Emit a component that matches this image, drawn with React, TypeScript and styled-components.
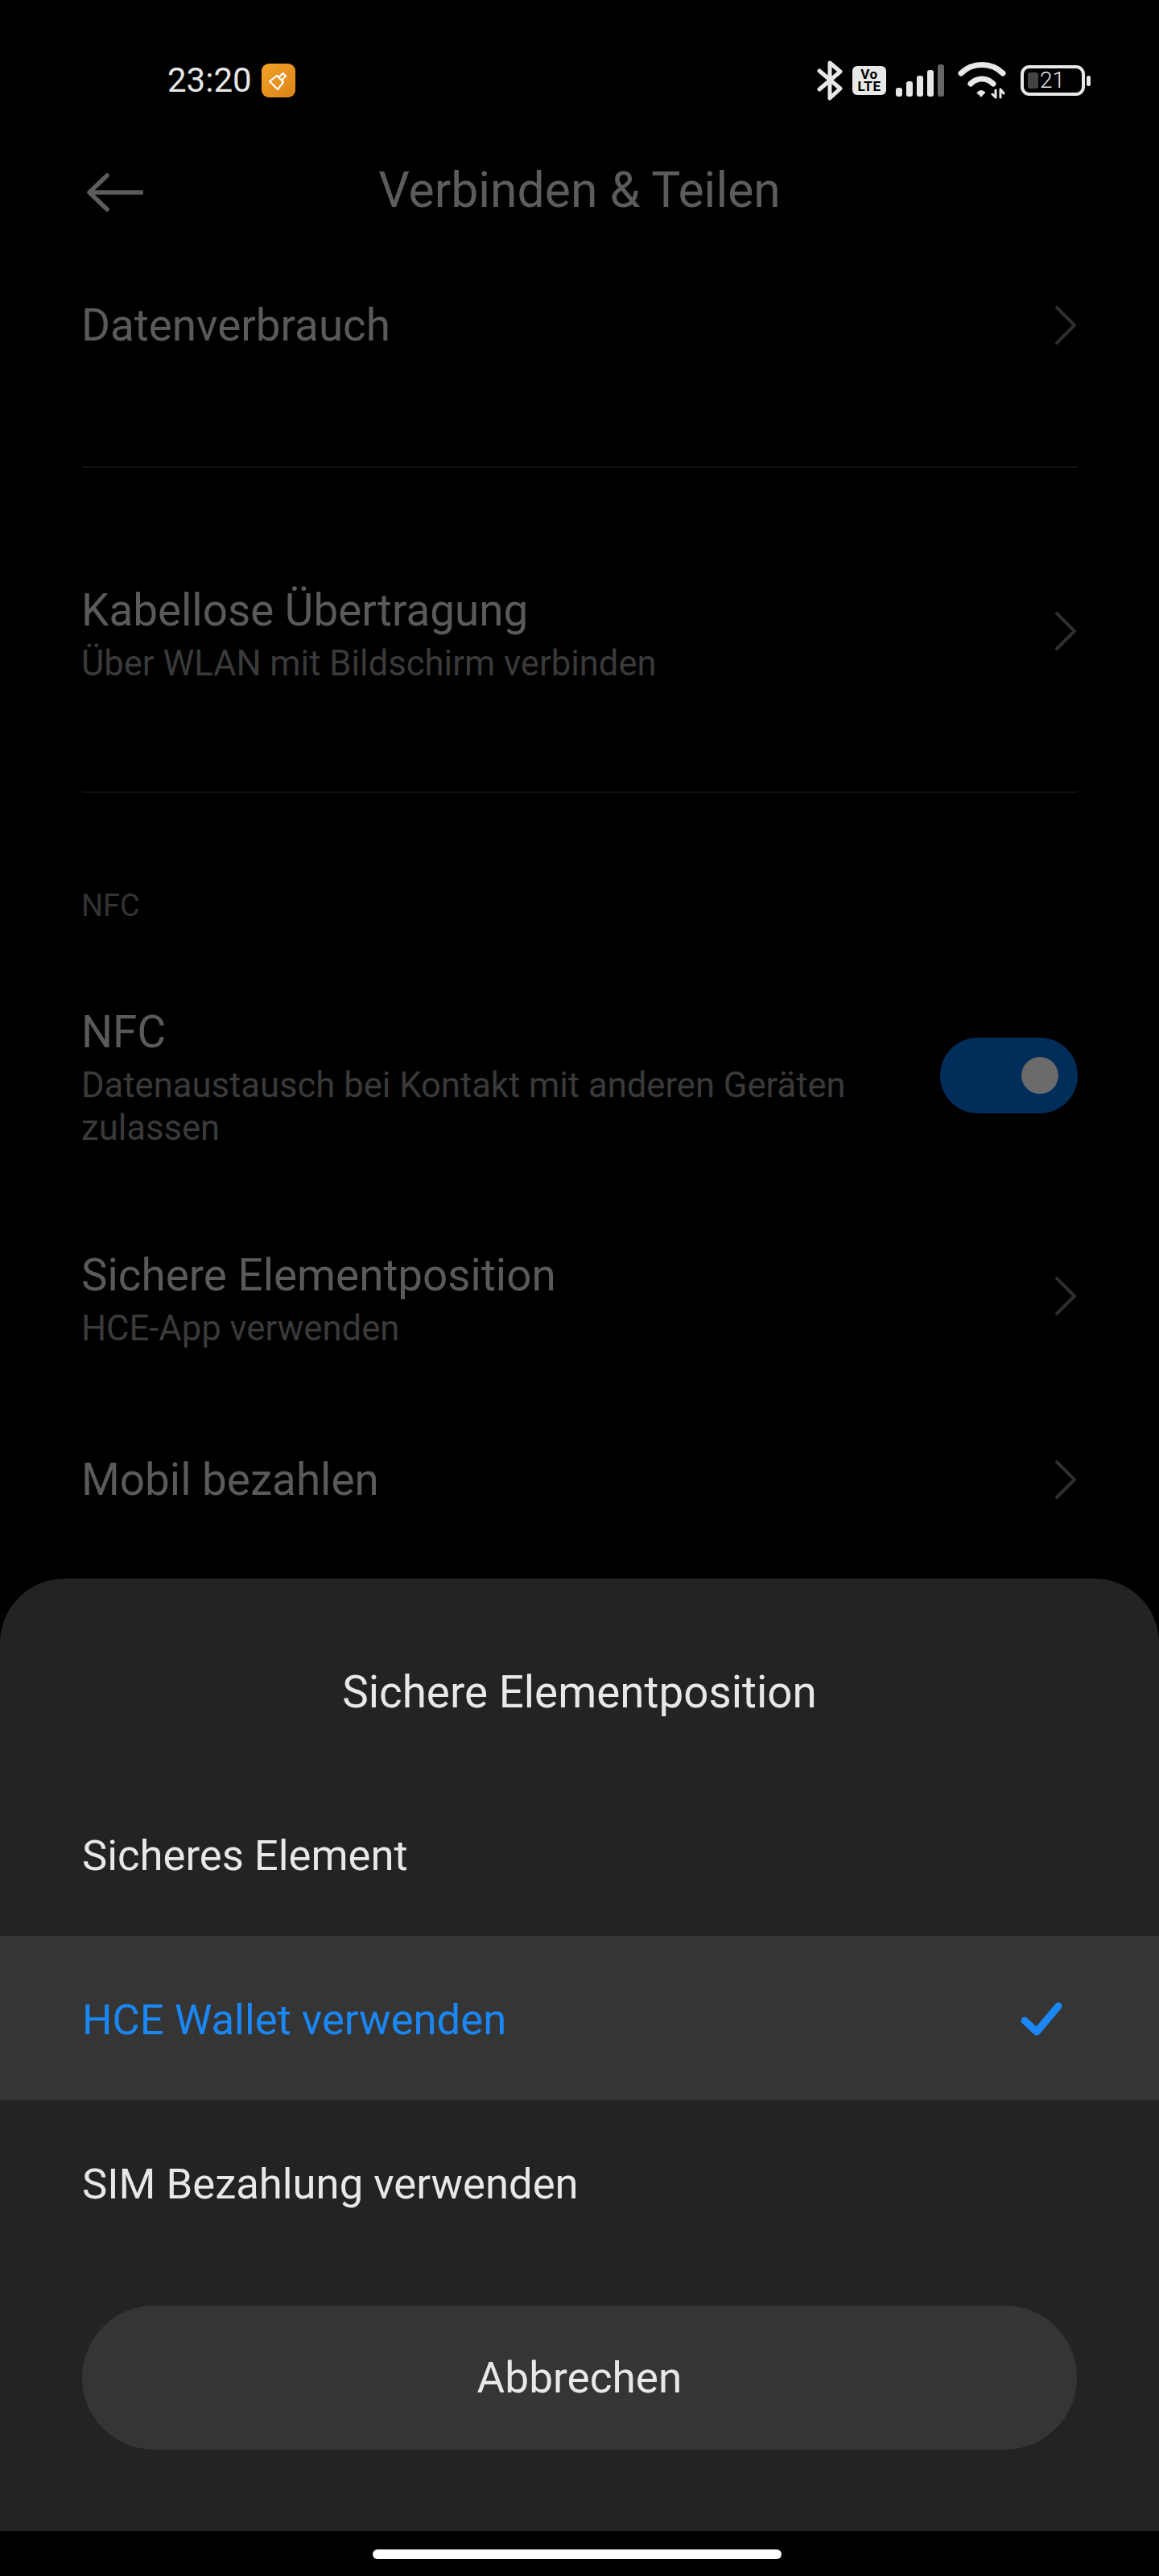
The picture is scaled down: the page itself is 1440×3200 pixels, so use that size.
import React from "react";
import styled, { createGlobalStyle } from "styled-components";

const Global = createGlobalStyle`
  html, body { margin: 0; padding: 0; background: #000; }
  * { box-sizing: border-box; }
`;

const Screen = styled.div`
  width: 1440px;
  height: 3200px;
  background: #000;
  display: flex;
  flex-direction: column;
  font-family: Roboto, "Liberation Sans", sans-serif;
  overflow: hidden;
`;

const StatusBar = styled.div`
  height: 130px;
  padding: 70px 84px 0 208px;
  display: flex;
  align-items: flex-start;
  justify-content: space-between;
  flex: none;
`;
const StatusLeft = styled.div`
  display: flex;
  align-items: center;
  gap: 12px;
  height: 60px;
`;
const StatusRight = styled.div`
  display: flex;
  align-items: center;
  height: 60px;
  gap: 12px;
`;
const Clock = styled.span`
  font-size: 42px;
  line-height: 60px;
  color: #e6e6e6;
`;
const CleanBadge = styled.div`
  width: 42px;
  height: 42px;
  border-radius: 9px;
  background: linear-gradient(135deg, #f0a126, #dc8419);
  display: flex;
  align-items: center;
  justify-content: center;
`;
const Volte = styled.div`
  width: 42px;
  height: 36px;
  border-radius: 6px;
  background: #e8e8e8;
  color: #000;
  font-size: 17px;
  line-height: 15px;
  font-weight: 700;
  text-align: center;
  padding-top: 3px;
  letter-spacing: 0.5px;
`;
const SignalIcon = styled.svg`
  width: 60px;
  height: 40px;
  flex: none;
`;
const WifiIcon = styled.svg`
  width: 60px;
  height: 46px;
  margin-left: 5px;
  flex: none;
`;
const Battery = styled.div`
  position: relative;
  width: 80px;
  height: 38px;
  border: 4px solid #e8e8e8;
  border-radius: 11px;
  display: flex;
  align-items: center;
  padding-left: 5px;
  margin-left: 6px;
  margin-right: 8px;
`;
const BatteryLevel = styled.div`
  width: 13px;
  height: 20px;
  border-radius: 3px;
  background: #444;
  flex: none;
`;
const BatteryText = styled.span`
  font-size: 28px;
  font-weight: 300;
  color: #e8e8e8;
  margin-left: 2px;
  line-height: 30px;
`;
const BatteryNub = styled.div`
  position: absolute;
  left: 78px;
  top: 9px;
  width: 5px;
  height: 13px;
  border-radius: 3px;
  background: #e8e8e8;
`;

const Header = styled.div`
  height: 212px;
  flex: none;
  display: grid;
  grid-template-columns: 1fr auto 1fr;
  align-items: start;
  padding-top: 72px;
`;
const BackIcon = styled.svg`
  width: 70px;
  height: 50px;
  margin: 12px 0 0 108px;
`;
const Title = styled.h1`
  margin: 0;
  font-size: 60.7px;
  line-height: 70px;
  font-weight: 400;
  color: #5c5c5c;
`;

const Content = styled.div`
  flex: 1;
  min-height: 0;
  padding: 0 100px 0 101px;
  display: flex;
  flex-direction: column;
`;
const Row = styled.div<{ $h: number; $mt?: number }>`
  height: ${(p) => p.$h}px;
  margin-top: ${(p) => p.$mt ?? 0}px;
  flex: none;
  display: flex;
  align-items: center;
  justify-content: space-between;
`;
const RowText = styled.div`
  display: flex;
  flex-direction: column;
  max-width: 980px;
  padding-top: 2px;
`;
const RowTitle = styled.div`
  font-size: 54.8px;
  line-height: 66px;
  color: #5a5a5a;
`;
const RowSub = styled.div`
  font-size: 43.6px;
  line-height: 53px;
  margin-top: 7px;
  color: #3a3a3a;
`;
const Chevron = styled.svg<{ $up?: boolean }>`
  width: 30px;
  height: 54px;
  flex: none;
  margin-bottom: ${(p) => (p.$up ? 6 : 0)}px;
`;
const Divider = styled.div<{ $after: number; $before: number }>`
  height: 2px;
  background: #101010;
  margin: ${(p) => p.$before}px 1px ${(p) => p.$after}px;
  flex: none;
`;
const SectionLabel = styled.div`
  font-size: 38px;
  line-height: 44px;
  color: #333;
  flex: none;
  padding-top: 1px;
`;
const Switch = styled.div`
  width: 171px;
  height: 94px;
  border-radius: 47px;
  background: #002d5a;
  display: flex;
  align-items: center;
  justify-content: flex-end;
  padding-right: 24px;
  flex: none;
  margin: 0 1px 4px 0;
`;
const Knob = styled.div`
  width: 46px;
  height: 46px;
  border-radius: 50%;
  background: #6b6b6b;
`;

const Sheet = styled.div`
  flex: none;
  height: 1183px;
  background: #232324;
  border-radius: 80px 80px 0 0;
  display: flex;
  flex-direction: column;
`;
const SheetTitle = styled.div`
  font-size: 54.8px;
  line-height: 70px;
  color: #e8e8e8;
  text-align: center;
  padding-top: 106px;
  height: 240px;
`;
const Option = styled.div<{ $active?: boolean }>`
  height: 204px;
  padding: 3px 102px 0;
  display: flex;
  align-items: center;
  justify-content: space-between;
  font-size: 52.6px;
  color: ${(p) => (p.$active ? "#1a87f5" : "#e8e8e8")};
  background: ${(p) => (p.$active ? "#353536" : "transparent")};
`;
const CheckIcon = styled.svg`
  width: 60px;
  height: 50px;
  margin-right: 14px;
`;
const CancelButton = styled.div`
  margin: 51px 102px 0;
  height: 179px;
  border-radius: 90px;
  background: #353536;
  color: #e8e8e8;
  font-size: 53.2px;
  display: flex;
  align-items: center;
  justify-content: center;
`;
const NavArea = styled.div`
  flex: none;
  height: 56px;
  display: flex;
  justify-content: center;
  padding-top: 23px;
`;
const HomeBar = styled.div`
  width: 508px;
  height: 12px;
  border-radius: 6px;
  background: #fff;
  margin-left: -6px;
`;

const RowChevron = ({ up }: { up?: boolean }) => (
  <Chevron $up={up} viewBox="0 0 30 54" fill="none">
    <path d="M3 5 L25 27 L3 49" stroke="#2e2e2e" strokeWidth="4" strokeLinecap="round" strokeLinejoin="round" />
  </Chevron>
);

export default function App() {
  return (
    <Screen>
      <Global />
      <StatusBar>
        <StatusLeft>
          <Clock>23:20</Clock>
          <CleanBadge>
            <svg width="28" height="28" viewBox="0 0 28 28" fill="none" stroke="#fff" strokeWidth="2.2" strokeLinejoin="round" strokeLinecap="round">
              <path d="M3 15 L12 8 L20 16 L13 25 Z" />
              <path d="M12 8 L14.5 10 L19.5 5 L23 8.5 L18 13.5 L20 16" />
            </svg>
          </CleanBadge>
        </StatusLeft>
        <StatusRight>
          <svg width="32" height="50" viewBox="0 0 32 50" fill="none" stroke="#e8e8e8" strokeWidth="5" strokeLinecap="round" strokeLinejoin="round">
            <path d="M3 13 L29 35 L16 47 L16 3 L29 14 L3 36" />
          </svg>
          <Volte>
            Vo
            <br />
            LTE
          </Volte>
          <SignalIcon viewBox="0 0 60 40" fill="#e8e8e8">
            <rect x="0" y="29" width="8" height="11" rx="3" />
            <rect x="13" y="21" width="8" height="19" rx="3" />
            <rect x="26" y="14" width="8" height="26" rx="3" />
            <rect x="39" y="7" width="8" height="33" rx="3" />
            <rect x="52" y="0" width="8" height="40" rx="3" fill="#666" />
          </SignalIcon>
          <WifiIcon viewBox="0 0 60 46" fill="none" stroke="#e8e8e8" strokeWidth="7" strokeLinecap="round">
            <path d="M4 14 C18 0 42 0 56 14" />
            <path d="M16 27 C24 19 36 19 44 27" />
            <path d="M24 38 Q29 33 34 38 L29 43 Z" fill="#e8e8e8" strokeWidth="1" strokeLinejoin="round" />
            <path d="M47 44 L47 35 M43 40 L47 44 M53 34 L53 44 M53 34 L57 39" strokeWidth="3" />
          </WifiIcon>
          <Battery>
            <BatteryLevel />
            <BatteryText>21</BatteryText>
            <BatteryNub />
          </Battery>
        </StatusRight>
      </StatusBar>

      <Header>
        <BackIcon viewBox="0 0 70 50" fill="none">
          <path d="M25 4 L3 25 L25 46 M3 25 L68 25" stroke="#5c5c5c" strokeWidth="5.5" strokeLinecap="round" strokeLinejoin="round" />
        </BackIcon>
        <Title>Verbinden &amp; Teilen</Title>
      </Header>

      <Content>
        <Row $h={124}>
          <RowTitle>Datenverbrauch</RowTitle>
          <RowChevron />
        </Row>
        <Divider $before={113} $after={143} />
        <Row $h={125}>
          <RowText>
            <RowTitle>Kabellose Übertragung</RowTitle>
            <RowSub>Über WLAN mit Bildschirm verbinden</RowSub>
          </RowText>
          <RowChevron up />
        </Row>
        <Divider $before={134} $after={117} />
        <SectionLabel>NFC</SectionLabel>
        <Row $h={179} $mt={101}>
          <RowText>
            <RowTitle>NFC</RowTitle>
            <RowSub>Datenaustausch bei Kontakt mit anderen Geräten zulassen</RowSub>
          </RowText>
          <Switch>
            <Knob />
          </Switch>
        </Row>
        <Row $h={125} $mt={123}>
          <RowText>
            <RowTitle>Sichere Elementposition</RowTitle>
            <RowSub>HCE-App verwenden</RowSub>
          </RowText>
          <RowChevron up />
        </Row>
        <Row $h={66} $mt={130}>
          <RowTitle>Mobil bezahlen</RowTitle>
          <RowChevron />
        </Row>
      </Content>

      <Sheet>
        <SheetTitle>Sichere Elementposition</SheetTitle>
        <Option>Sicheres Element</Option>
        <Option $active>
          HCE Wallet verwenden
          <CheckIcon viewBox="0 0 60 50" fill="none">
            <path d="M9 26 L24 40 L51 8" stroke="#1a87f5" strokeWidth="9" strokeLinecap="round" strokeLinejoin="round" />
          </CheckIcon>
        </Option>
        <Option>SIM Bezahlung verwenden</Option>
        <CancelButton>Abbrechen</CancelButton>
      </Sheet>
      <NavArea>
        <HomeBar />
      </NavArea>
    </Screen>
  );
}
